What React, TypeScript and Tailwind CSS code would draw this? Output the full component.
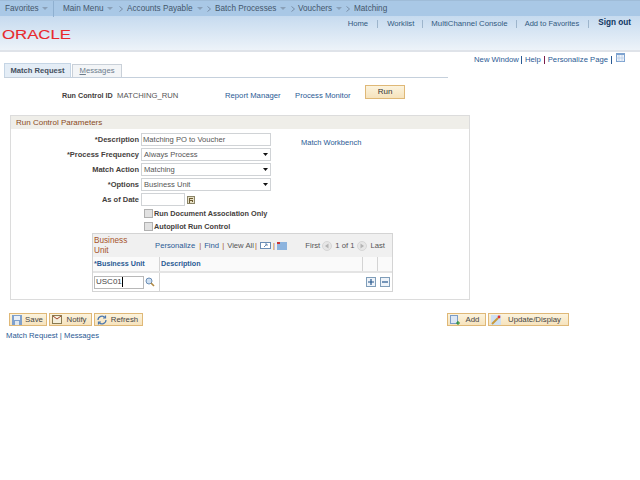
import React from "react";

const Caret = ({ cls = "" }: { cls?: string }) => (
  <svg width="6" height="3" viewBox="0 0 6 3" className={`inline-block shrink-0 ${cls}`}><path d="M0 0h6L3 3z" fill="#8aa0b8" /></svg>
);
const Crumb = ({ w, children }: { w: string; children: React.ReactNode }) => (
  <span className={`flex shrink-0 items-center whitespace-nowrap ${w}`}>{children}</span>
);
const Gt = () => (
  <svg width="4" height="6" viewBox="0 0 4 6" className="shrink-0"><path d="M.5.5L3.5 3 .5 5.5" fill="none" stroke="#6f8298" strokeWidth=".8" /></svg>
);

const Arrow = () => (
  <svg width="5" height="3" viewBox="0 0 5 3"><path d="M0 0h5L2.5 3z" fill="#111" /></svg>
);

const Pager = ({ d }: { d: string }) => (
  <svg width="10" height="10" viewBox="0 0 10 10" className="shrink-0"><circle cx="5" cy="5" r="4.5" fill="#e6e6e6" stroke="#d6d6d6" /><path d={d} fill="#b4b4b4" /></svg>
);

function Select({ value }: { value: string }) {
  return (
    <div className="flex h-[13px] w-[130px] items-center justify-between border border-[#d0d3d6] bg-white pl-[2px] pr-[2px] text-[7.6px] leading-none text-[#555]">
      <span className="whitespace-nowrap">{value}</span>
      <Arrow />
    </div>
  );
}

function Row({ label, children }: { label: string; children: React.ReactNode }) {
  return (
    <div className="flex h-[15px] items-center">
      <div className="w-[130px] whitespace-nowrap pr-[2px] text-right text-[7.5px] font-bold text-[#44403c]">{label}</div>
      {children}
    </div>
  );
}

function ActionButton({ icon, label, w }: { icon: React.ReactNode; label: string; w: string }) {
  return (
    <div className={`flex h-[13px] items-center border border-[#dfb877] bg-gradient-to-b from-[#fcf3dd] to-[#f6e3bd] ${w}`}>
      <span className="ml-[2px] flex h-[10px] w-[10px] shrink-0 items-center justify-center">{icon}</span>
      <span className="flex-1 whitespace-nowrap text-center text-[7.8px] text-[#444]">{label}</span>
    </div>
  );
}

export default function App() {
  return (
    <div className="h-[480px] w-[640px] overflow-hidden bg-white text-[7.7px] leading-none text-[#333] [font-family:'Liberation_Sans',Arial,sans-serif]">
      <header className="h-[52px] border-b-2 border-[#dfe3e9] bg-gradient-to-b from-[#b4cfea] to-[#edf3f9]">
        <nav className="flex h-[16px] items-center border-t border-[#9fbcd8] bg-[#a9c8e6] pt-[1px] text-[8.2px] text-[#44576c]">
          <Crumb w="w-[53px] pl-[5px]">Favorites<Caret cls="ml-[3px]" /></Crumb>
          <span className="h-[16px] w-px bg-[#8fb0d0]" />
          <Crumb w="w-[65px] pl-[9px]">Main Menu<Caret cls="ml-[3px]" /></Crumb>
          <Crumb w="w-[8px]"><Gt /></Crumb>
          <Crumb w="w-[88px]">Accounts Payable<Caret cls="ml-[4px]" /></Crumb>
          <Crumb w="w-[83px] ml-[-8px]"><Gt /><span className="ml-[4px]">Batch Processes</span><Caret cls="ml-[4px]" /></Crumb>
          <Crumb w="w-[62px] ml-[1px]"><Gt /><span className="ml-[3px]">Vouchers</span><Caret cls="ml-[4px]" /></Crumb>
          <Crumb w="w-[50px] ml-[-7px]"><Gt /><span className="ml-[4px]">Matching</span></Crumb>
        </nav>
        <div className="flex h-[13px] items-center justify-end pr-[9px] pt-[2px] text-[7.7px] text-[#31597f]">
          <span>Home</span>
          <span className="mx-[9px] h-[8px] w-px bg-[#9db5cc]" />
          <span>Worklist</span>
          <span className="mx-[8px] h-[8px] w-px bg-[#9db5cc]" />
          <span className="text-[7.8px]">MultiChannel Console</span>
          <span className="mx-[8px] h-[8px] w-px bg-[#9db5cc]" />
          <span className="text-[7.5px]">Add to Favorites</span>
          <span className="mx-[9px] h-[8px] w-px bg-[#9db5cc]" />
          <span className="text-[8.2px] font-bold text-[#0f3560]">Sign out</span>
        </div>
        <svg width="74" height="14" viewBox="0 0 74 14" className="ml-[2px] block">
          <text x="0" y="9.5" textLength="69" lengthAdjust="spacingAndGlyphs" fontFamily="Liberation Sans" fontSize="12.5" fill="#e8282c" stroke="#e8282c" strokeWidth=".12">ORACLE</text>
        </svg>
      </header>

      <div className="flex h-[12px] items-center justify-end pr-[15px] pt-[3px] text-[#2a5a94]">
        <span>New Window</span>
        <span className="ml-[2px] mr-[3px] h-[8px] w-px bg-[#2a5a94]" />
        <span>Help</span>
        <span className="mx-[3px] h-[8px] w-px bg-[#7a1c4a]" />
        <span>Personalize Page</span>
        <span className="ml-[3px] mr-[4px] h-[8px] w-px bg-[#2a5a94]" />
        <svg width="9" height="9" viewBox="0 0 9 9" className="mb-[4px]"><rect x=".5" y=".5" width="8" height="8" fill="#eef3fa" stroke="#7ea3d0" /><path d="M0 0h9v2H0z" fill="#7ea3d0" /><path d="M3 2v7M6 2v7M0 5h9" stroke="#a9c3e2" strokeWidth=".6" /></svg>
      </div>

      <div className="ml-[4px] flex h-[14px] w-[444px] items-end gap-px border-b border-[#c5d0dc]">
        <div className="flex h-[14px] w-[67px] items-center justify-center whitespace-nowrap border border-b-0 border-[#c5d5e5] bg-[#e4edf6] text-[7.6px] font-bold text-[#44505e]">Match Request</div>
        <div className="flex h-[13px] w-[50px] items-center justify-center border border-b-0 border-[#c9d0d8] bg-[#f3f5f7] text-[#6c7c8c]"><span><u>M</u>essages</span></div>
      </div>

      <div className="flex h-[22px] items-start pl-[62px]">
        <span className="mt-[14px] w-[55px] whitespace-nowrap text-[7.2px] font-bold text-[#44403c]">Run Control ID</span>
        <span className="mt-[14px] w-[108px] text-[#555]">MATCHING_RUN</span>
        <span className="mt-[14px] w-[70px] whitespace-nowrap text-[#2a5a94]">Report Manager</span>
        <span className="mt-[14px] w-[70px] whitespace-nowrap text-[#2a5a94]">Process Monitor</span>
        <div className="mt-[7px] flex h-[14px] w-[40px] items-center justify-center border border-[#dfb877] bg-gradient-to-b from-[#fcf3dd] to-[#f6e3bd] text-[8px] text-[#333]">Run</div>
      </div>

      <section className="ml-[10px] mt-[15px] h-[185px] w-[460px] border border-[#dcdcdc]">
        <div className="flex h-[13px] items-center bg-[#efeee9] pl-[5px] text-[8px] text-[#8a4a22]">Run Control Parameters</div>
        <div className="mt-[3px] flex">
          <div>
            <Row label="*Description">
              <div className="flex h-[13px] w-[130px] items-center border border-[#d0d3d6] bg-white pl-[1px] text-[7.6px] text-[#555]">Matching PO to Voucher</div>
            </Row>
            <Row label="*Process Frequency"><Select value="Always Process" /></Row>
            <Row label="Match Action"><Select value="Matching" /></Row>
            <Row label="*Options"><Select value="Business Unit" /></Row>
            <Row label="As of Date">
              <div className="h-[13px] w-[44px] border border-[#d0d3d6] bg-white" />
              <svg width="8" height="8" viewBox="0 0 8 8" className="ml-[2px]"><rect x=".5" y=".5" width="7" height="7" fill="#e9e2c8" stroke="#8a8468" /><path d="M2 2h4v1H3v1h3v2H5V5H3v2H2z" fill="#6b5a30" /></svg>
            </Row>
            <div className="flex h-[13px] items-center pl-[133px]">
              <span className="h-[9px] w-[9px] border border-[#b0b0b0] bg-[#e2e2e2]" />
              <span className="ml-[1px] whitespace-nowrap text-[7.3px] font-bold text-[#44403c]">Run Document Association Only</span>
            </div>
            <div className="flex h-[13px] items-center pl-[133px]">
              <span className="h-[9px] w-[9px] border border-[#b0b0b0] bg-[#e2e2e2]" />
              <span className="ml-[1px] whitespace-nowrap text-[7.3px] font-bold text-[#44403c]">Autopilot Run Control</span>
            </div>
          </div>
          <span className="ml-[30px] mt-[7px] whitespace-nowrap text-[7.5px] text-[#2a5a94]">Match Workbench</span>
        </div>

        <div className="ml-[81px] h-[59px] w-[301px] border border-[#d4d4d4]">
          <div className="flex h-[23px] items-center bg-[#f0f0f0]">
            <div className="w-[62px] pl-[1px] text-[8.2px] leading-[10px] text-[#a5522a]">Business<br />Unit</div>
            <div className="flex shrink-0 items-center whitespace-nowrap pt-[1px] text-[#2a5a94]">
              <span>Personalize</span>
              <span className="ml-[4px] mr-[3px] text-[#a5522a]">|</span>
              <span>Find</span>
              <span className="mx-[3px] text-[#a5522a]">|</span>
              <span className="text-[#555]">View All</span>
              <span className="ml-[1px] mr-[3px] text-[#a5522a]">|</span>
              <svg width="11" height="8" viewBox="0 0 11 8"><rect x=".5" y=".5" width="10" height="6" fill="#fff" stroke="#6a8db5" /><path d="M4 5l3-3M5 2h2v2" fill="none" stroke="#6a8db5" /></svg>
              <span className="mx-[2px] text-[#a5522a]">|</span>
              <svg width="10" height="8" viewBox="0 0 10 8"><rect width="10" height="8" fill="#8db4de" /><rect x="0" width="3" height="2" fill="#c33" /></svg>
            </div>
            <div className="ml-auto mr-[7px] flex items-center whitespace-nowrap pt-[1px] text-[#555]">
              <span>First</span>
              <span className="ml-[2px] mr-[3px]"><Pager d="M6.5 2.5v5L3 5z" /></span>
              <span>1 of 1</span>
              <span className="mx-[3px]"><Pager d="M3.5 2.5v5L7 5z" /></span>
              <span>Last</span>
            </div>
          </div>
          <div className="flex h-[16px] items-center border-b-2 border-[#e4e4e4] bg-[#fafafa] text-[7.2px] font-bold text-[#2a5a94]">
            <div className="flex h-full w-[67px] items-center whitespace-nowrap border-r border-[#d4d4d4] pl-[1px]">*Business Unit</div>
            <div className="flex h-full flex-1 items-center pl-[1px]">Description</div>
            <div className="h-full w-[15px] border-l border-[#d4d4d4]" />
            <div className="h-full w-[15px] border-l border-[#d4d4d4]" />
          </div>
          <div className="flex h-[18px] items-center">
            <div className="flex h-full w-[67px] items-center border-r border-[#d4d4d4] pl-[1px]">
              <div className="flex h-[13px] w-[50px] items-center border border-[#b8b8b8] pl-[1px] text-[8px] text-[#444]">USC01<span className="h-[10px] w-px bg-black" /></div>
              <svg width="10" height="10" viewBox="0 0 10 10" className="ml-[1px]"><circle cx="4" cy="4" r="3" fill="#cfe0f2" stroke="#6a8db5" /><path d="M6 6l3 3" stroke="#b08840" strokeWidth="1.6" /></svg>
            </div>
            <div className="flex h-full flex-1" />
            <div className="flex h-full w-[30px] items-center justify-center gap-[4px] pl-[1px]">
              <svg width="10" height="10" viewBox="0 0 10 10"><rect x=".5" y=".5" width="9" height="9" fill="#eef3f9" stroke="#7f9db9" /><path d="M2 5h6M5 2v6" stroke="#24568c" strokeWidth="1.2" /></svg>
              <svg width="10" height="10" viewBox="0 0 10 10"><rect x=".5" y=".5" width="9" height="9" fill="#eef3f9" stroke="#7f9db9" /><path d="M2 5h6" stroke="#24568c" strokeWidth="1.2" /></svg>
            </div>
          </div>
        </div>
      </section>

      <div className="mt-[13px] flex w-[569px] justify-between pl-[9px]">
        <div className="flex gap-[2px]">
          <ActionButton w="w-[38px]" label="Save" icon={<svg width="10" height="10" viewBox="0 0 10 10"><rect width="10" height="10" fill="#7fa0cc" /><rect x="2" y="1" width="6" height="4" fill="#e8eff8" /><rect x="3" y="6" width="4" height="4" fill="#dfe7f0" /></svg>} />
          <ActionButton w="w-[43px]" label="Notify" icon={<svg width="10" height="9" viewBox="0 0 10 9"><rect x=".5" y=".5" width="9" height="8" fill="#f4efdc" stroke="#8a7a50" /><path d="M1 1l4 3 4-3" fill="none" stroke="#a3452c" /></svg>} />
          <ActionButton w="w-[49px]" label="Refresh" icon={<svg width="10" height="10" viewBox="0 0 10 10" fill="none" stroke="#4a76ad" strokeWidth="1.2"><path d="M1 5a4 4 0 017-2.5M9 5a4 4 0 01-7 2.5" /><path d="M8.5 0.5v2.5H6M1.5 9.5V7H4" /></svg>} />
        </div>
        <div className="flex gap-[2px]">
          <ActionButton w="w-[39px]" label="Add" icon={<svg width="10" height="10" viewBox="0 0 10 10"><rect x=".5" y=".5" width="7" height="8" fill="#dce7f5" stroke="#7b9cc6" /><path d="M6 8h4M8 6v4" stroke="#1d8a2d" /></svg>} />
          <ActionButton w="w-[81px]" label="Update/Display" icon={<svg width="10" height="10" viewBox="0 0 10 10"><rect width="10" height="10" fill="#cfe0f2" /><path d="M1 9l6-6" stroke="#c89a3c" strokeWidth="2" /><circle cx="8" cy="2" r="1.4" fill="#d33" /></svg>} />
        </div>
      </div>

      <div className="ml-[6px] mt-[6px] text-[#2a5a94]">Match Request | Messages</div>
    </div>
  );
}
